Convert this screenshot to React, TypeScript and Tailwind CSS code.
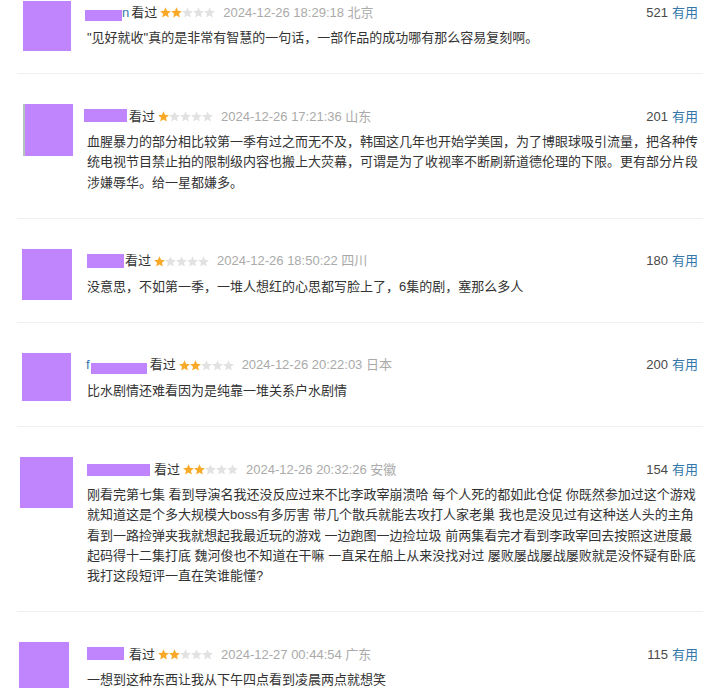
import React from "react";

type Item = {
  avatar: string;
  name: React.ReactNode;
  stars: number;
  date: string;
  votes: string;
  lines: string[];
  first?: boolean;
};

const Star = ({ on }: { on: boolean }) => (
  <svg width="11" height="11" viewBox="1 1.5 22 21" className="block">
    <polygon
      points="12,1.5 15,8.6 22.8,9.3 16.9,14.5 18.7,22.2 12,18.1 5.3,22.2 7.1,14.5 1.2,9.3 9,8.6"
      fill={on ? "#f8a928" : "#e2e2e2"}
    />
  </svg>
);

const items: Item[] = [
  {
    first: true,
    avatar: "ml-[6px] mt-[1px] w-[48px] h-[50px]",
    name: (
      <span className="flex items-center ml-[-2px] mr-[2px]">
        <span className="block w-[37px] h-[11px] mt-[5px] bg-[#c084fc]" />
        <span className="text-[#3377aa]">n</span>
      </span>
    ),
    stars: 2,
    date: "2024-12-26 18:29:18 北京",
    votes: "521",
    lines: ['"见好就收"真的是非常有智慧的一句话，一部作品的成功哪有那么容易复刻啊。'],
  },
  {
    avatar: "ml-[6px] w-[50px] h-[52px] border-l-[2px] border-[#b4c4bd]",
    name: (
      <span className="flex items-center ml-[-3px] mr-[2px]">
        <span className="block w-[43px] h-[13px] mt-[-2px] bg-[#c084fc]" />
      </span>
    ),
    stars: 1,
    date: "2024-12-26 17:21:36 山东",
    votes: "201",
    lines: [
      "血腥暴力的部分相比较第一季有过之而无不及，韩国这几年也开始学美国，为了博眼球吸引流量，把各种传",
      "统电视节目禁止拍的限制级内容也搬上大荧幕，可谓是为了收视率不断刷新道德伦理的下限。更有部分片段",
      "涉嫌辱华。给一星都嫌多。",
    ],
  },
  {
    avatar: "ml-[5px] w-[50px] h-[51px]",
    name: (
      <span className="flex items-center mr-[1px]">
        <span className="block w-[37px] h-[14px] bg-[#c084fc]" />
      </span>
    ),
    stars: 1,
    date: "2024-12-26 18:50:22 四川",
    votes: "180",
    lines: ["没意思，不如第一季，一堆人想红的心思都写脸上了，6集的剧，塞那么多人"],
  },
  {
    avatar: "ml-[5px] w-[49px] h-[48px]",
    name: (
      <span className="flex items-center ml-[-1px] mr-[3px]">
        <span className="text-[#3377aa]">f</span>
        <span className="block w-[56px] h-[11px] mt-[6px] ml-[1px] bg-[#c084fc]" />
      </span>
    ),
    stars: 2,
    date: "2024-12-26 20:22:03 日本",
    votes: "200",
    lines: ["比水剧情还难看因为是纯靠一堆关系户水剧情"],
  },
  {
    avatar: "ml-[3px] w-[53px] h-[51px]",
    name: (
      <span className="flex items-center mr-[4px]">
        <span className="block w-[63px] h-[12px] bg-[#c084fc]" />
      </span>
    ),
    stars: 2,
    date: "2024-12-26 20:32:26 安徽",
    votes: "154",
    lines: [
      "刚看完第七集 看到导演名我还没反应过来不比李政宰崩溃哈 每个人死的都如此仓促 你既然参加过这个游戏",
      "就知道这是个多大规模大boss有多厉害 带几个散兵就能去攻打人家老巢 我也是没见过有这种送人头的主角",
      "看到一路捡弹夹我就想起我最近玩的游戏 一边跑图一边捡垃圾 前两集看完才看到李政宰回去按照这进度最",
      "起码得十二集打底 魏河俊也不知道在干嘛 一直呆在船上从来没找对过 屡败屡战屡战屡败就是没怀疑有卧底",
      "我打这段短评一直在笑谁能懂?",
    ],
  },
  {
    avatar: "ml-[2px] w-[50px] h-[50px]",
    name: (
      <span className="flex items-center mr-[5px]">
        <span className="block w-[37px] h-[13px] mt-[-2px] bg-[#c084fc]" />
      </span>
    ),
    stars: 2,
    date: "2024-12-27 00:44:54 广东",
    votes: "115",
    lines: ["一想到这种东西让我从下午四点看到凌晨两点就想笑"],
  },
];

export default function App() {
  return (
    <div className="w-[710px] h-[688px] overflow-hidden bg-white text-[13px] leading-[20px] font-['Liberation_Sans','Noto_Sans_CJK_SC',sans-serif]">
      <div className="ml-[17px] w-[686px]">
        {items.map((it, i) => (
          <div
            key={i}
            className={
              it.first
                ? "flex items-start pb-[22px] border-b border-[#f0f0f0]"
                : "flex items-start pt-[30px] pb-[22px] border-b border-[#f0f0f0]"
            }
          >
            <div className="w-[70px] shrink-0">
              <div className={"bg-[#c084fc] " + it.avatar} />
            </div>
            <div className="flex-1 pr-[5px] pb-[3px]">
              <div className="flex h-[25px] items-center justify-between">
                <div className="flex items-center h-[25px]">
                  {it.name}
                  <span className="text-[#333]">看过</span>
                  <span className="flex ml-[3px]">
                    {[0, 1, 2, 3, 4].map((s) => (
                      <Star key={s} on={s < it.stars} />
                    ))}
                  </span>
                  <span className="ml-[8px] text-[#aaa]">{it.date}</span>
                </div>
                <div className="flex items-center gap-[4px] h-[25px]">
                  <span className="text-[#494949]">{it.votes}</span>
                  <span className="text-[#3377aa]">有用</span>
                </div>
              </div>
              <div className="mt-[3px] text-[#333]">
                {it.lines.map((l, j) => (
                  <div key={j} className="whitespace-nowrap h-[20.2px] leading-[20.2px]">
                    {l}
                  </div>
                ))}
              </div>
            </div>
          </div>
        ))}
      </div>
    </div>
  );
}
